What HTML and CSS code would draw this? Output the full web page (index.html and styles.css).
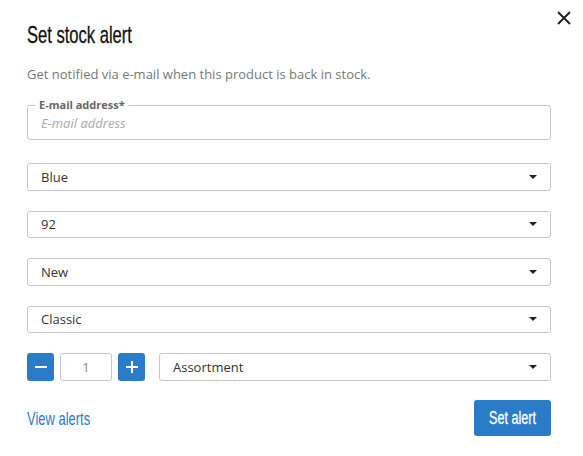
FILE: index.html
```html
<!DOCTYPE html>
<html>
<head>
<meta charset="utf-8">
<link rel="stylesheet" href="styles.css">
</head>
<body>
<div class="modal">
  <button class="close" aria-label="Close">
    <svg width="14" height="14" viewBox="0 0 14 14"><path d="M1 1L13 13M13 1L1 13" stroke="#222" stroke-width="2" fill="none"/></svg>
  </button>
  <h2 class="title"><span class="narrow">Set stock alert</span></h2>
  <p class="intro">Get notified via e-mail when this product is back in stock.</p>
  <fieldset class="email">
    <legend>E-mail address*</legend>
    <input type="text" placeholder="E-mail address">
  </fieldset>
  <div class="select"><span>Blue</span><i class="caret"></i></div>
  <div class="select"><span>92</span><i class="caret"></i></div>
  <div class="select"><span>New</span><i class="caret"></i></div>
  <div class="select"><span>Classic</span><i class="caret"></i></div>
  <div class="qty-row">
    <div class="qty">
      <button class="qbtn"><svg width="12" height="12" viewBox="0 0 12 12"><path d="M0 6H12" stroke="#fff" stroke-width="2"/></svg></button>
      <div class="qinput">1</div>
      <button class="qbtn"><svg width="12" height="12" viewBox="0 0 12 12"><path d="M0 6H12M6 0V12" stroke="#fff" stroke-width="2"/></svg></button>
    </div>
    <div class="select grow"><span>Assortment</span><i class="caret"></i></div>
  </div>
  <div class="footer">
    <a class="link"><span class="narrow">View alerts</span></a>
    <button class="primary"><span class="narrow">Set alert</span></button>
  </div>
</div>
</body>
</html>
```
FILE: styles.css
```css
* { box-sizing: border-box; }
html, body { margin: 0; padding: 0; background: #fff; }
body { font-family: "Open Sans", sans-serif; color: #333; }
.modal { position: relative; width: 583px; height: 456px; padding: 19px 32px 0 27px; }
.close { position: absolute; top: 11px; right: 12px; border: 0; background: none; padding: 0; width: 14px; height: 14px; display: block; }
.close svg { display: block; }
.narrow { display: inline-block; font-family: "Liberation Sans", Arial, sans-serif; transform: scaleX(0.69); transform-origin: left center; white-space: nowrap; -webkit-text-stroke: 0.3px currentColor; }
.title { margin: 0; font-weight: normal; font-size: 24px; line-height: 30px; color: #111; }
.intro { margin: 15px 0 0; font-size: 13px; line-height: 18px; color: #777; }
.email { margin: 16px 0 0; padding: 0 13px 6px 13px; border: 1px solid #c6c6c6; border-radius: 3px; height: 41px; }
.email legend { padding: 0 4px; margin-left: -6px; font-size: 11px; font-weight: bold; color: #666; line-height: 12px; }
.email input { border: 0; outline: none; padding: 0; margin: 0; font-family: "Open Sans", sans-serif; font-size: 13px; font-style: italic; width: 100%; height: 20px; line-height: 20px; }
.email input::placeholder { color: #aaa; }
.select { display: flex; align-items: center; justify-content: space-between; height: 27.5px; border: 1px solid #c6c6c6; border-radius: 3px; padding: 0 13px 0 13px; font-size: 13px; color: #333; }
.email + .select { margin-top: 23px; }
.select + .select { margin-top: 20px; }
.caret { width: 0; height: 0; border-left: 4px solid transparent; border-right: 4px solid transparent; border-top: 4px solid #222; }
.qty-row { display: flex; gap: 14px; margin-top: 20px; align-items: center; }
.qty { display: flex; gap: 6px; }
.qbtn { width: 27px; height: 28px; border: 0; border-radius: 3px; background: #2a7bc8; display: flex; align-items: center; justify-content: center; padding: 0; }
.qbtn svg { display: block; }
.qinput { width: 52px; height: 28px; border: 1px solid #c6c6c6; border-radius: 3px; display: flex; align-items: center; justify-content: center; font-size: 13px; color: #888; }
.grow { flex: 1; height: 28px; }
.footer { display: flex; justify-content: space-between; align-items: center; margin-top: 19px; }
.link { font-size: 18px; color: #2a7bc8; }
.link .narrow { transform: scaleX(0.72); -webkit-text-stroke: 0; }
.primary { width: 77px; height: 36px; border: 0; border-radius: 3px; background: #2a7bc8; color: #fff; font-size: 18px; padding: 0; display: flex; align-items: center; justify-content: center; }
.primary .narrow { transform: scaleX(0.7); transform-origin: center; }
```
